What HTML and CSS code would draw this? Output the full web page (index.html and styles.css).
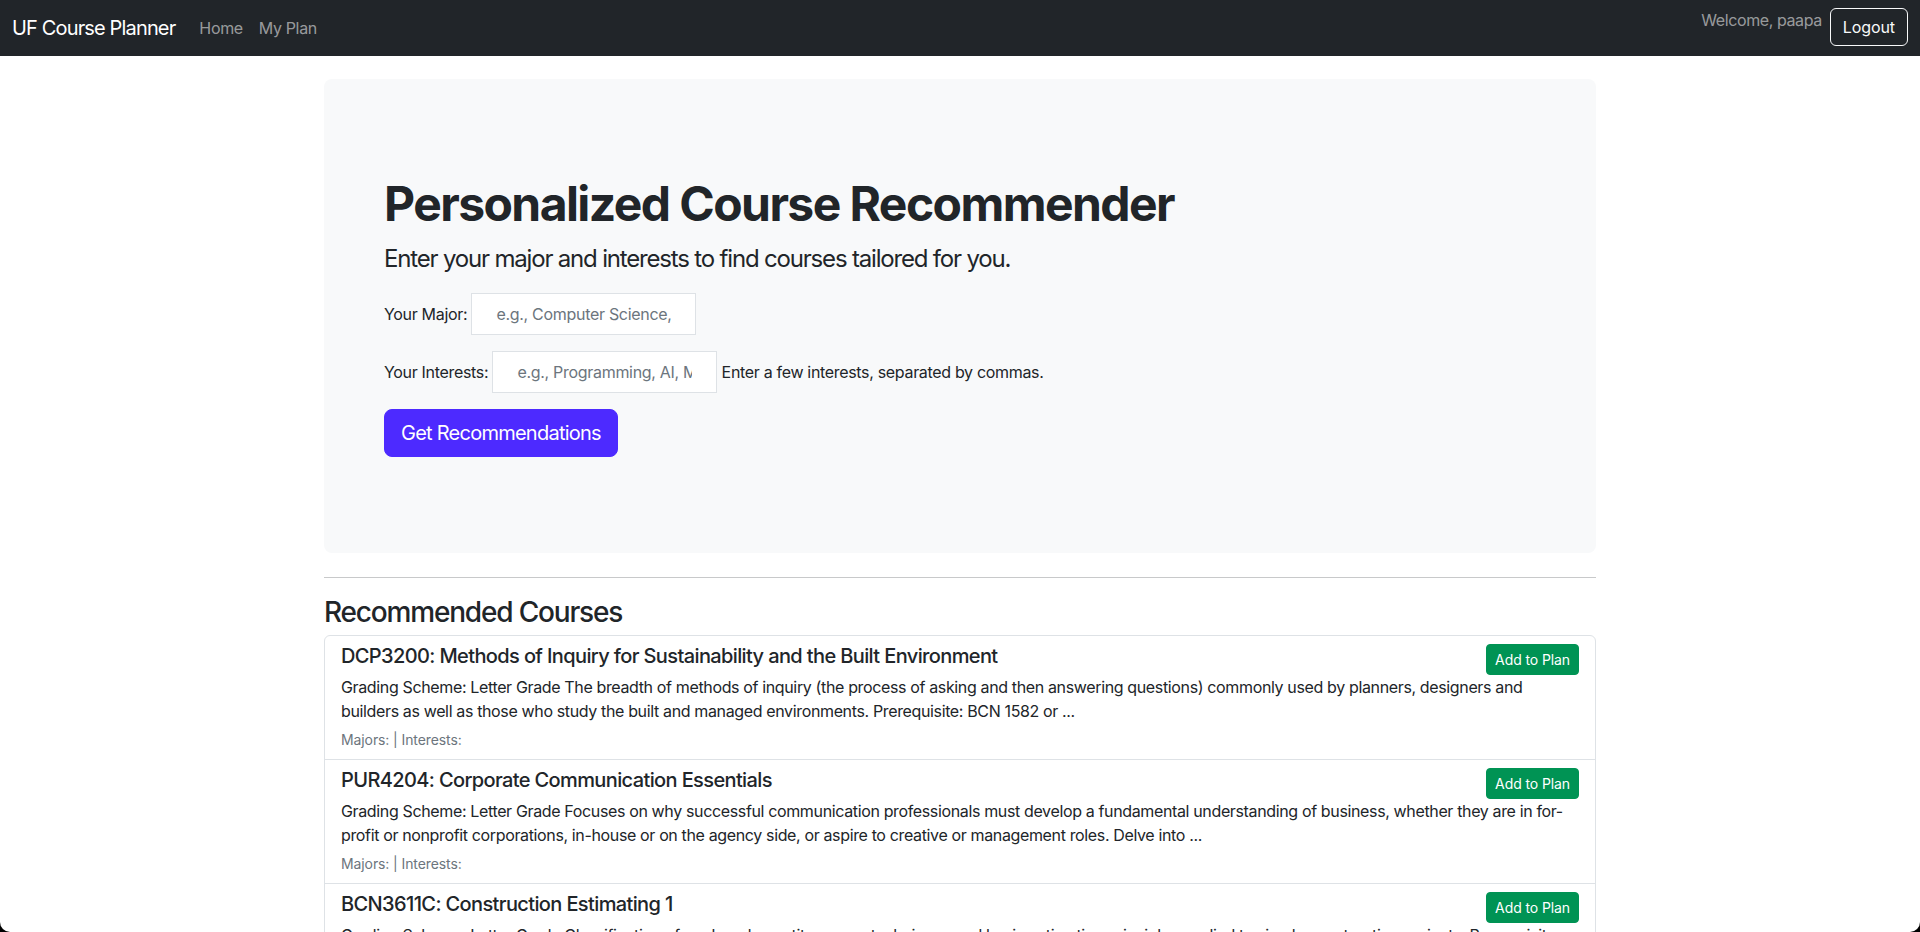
FILE: index.html
```html
<!DOCTYPE html>
<html lang="en">
<head>
<meta charset="utf-8">
<title>UF Course Planner</title>
<link rel="stylesheet" href="styles.css">
</head>
<body>
<nav class="navbar">
  <div class="nav-left">
    <a class="brand" href="#">UF Course Planner</a>
    <ul class="nav-links">
      <li><a href="#">Home</a></li>
      <li><a href="#">My Plan</a></li>
    </ul>
  </div>
  <div class="nav-right">
    <span class="welcome">Welcome, paapa</span>
    <button class="btn-logout" type="button">Logout</button>
  </div>
</nav>

<main class="page">
  <div class="page-inner">
    <section class="jumbo">
      <div class="jumbo-inner">
        <h1 class="title">Personalized Course Recommender</h1>
        <p class="lead">Enter your major and interests to find courses tailored for you.</p>
        <form class="rec-form">
          <div class="form-row">
            <label for="major">Your Major:</label>
            <input id="major" class="field" type="text" placeholder="e.g., Computer Science, Biology">
          </div>
          <div class="form-row">
            <label for="interests">Your Interests:</label>
            <input id="interests" class="field" type="text" placeholder="e.g., Programming, AI, Machine Learning">
            <span class="help">Enter a few interests, separated by commas.</span>
          </div>
          <button class="btn-recommend" type="button">Get Recommendations</button>
        </form>
      </div>
    </section>

    <hr class="divider">

    <h3 class="section-title">Recommended Courses</h3>
    <ul class="course-list">
      <li class="course">
        <div class="course-head">
          <h5 class="course-title">DCP3200: Methods of Inquiry for Sustainability and the Built Environment</h5>
          <button class="btn-add" type="button">Add to Plan</button>
        </div>
        <p class="course-desc">Grading Scheme: Letter Grade The breadth of methods of inquiry (the process of asking and then answering questions) commonly used by planners, designers and builders as well as those who study the built and managed environments. Prerequisite: BCN 1582 or ...</p>
        <small class="course-meta">Majors:  | Interests: </small>
      </li>
      <li class="course">
        <div class="course-head">
          <h5 class="course-title">PUR4204: Corporate Communication Essentials</h5>
          <button class="btn-add" type="button">Add to Plan</button>
        </div>
        <p class="course-desc">Grading Scheme: Letter Grade Focuses on why successful communication professionals must develop a fundamental understanding of business, whether they are in for-profit or nonprofit corporations, in-house or on the agency side, or aspire to creative or management roles. Delve into ...</p>
        <small class="course-meta">Majors:  | Interests: </small>
      </li>
      <li class="course">
        <div class="course-head">
          <h5 class="course-title">BCN3611C: Construction Estimating 1</h5>
          <button class="btn-add" type="button">Add to Plan</button>
        </div>
        <p class="course-desc">Grading Scheme: Letter Grade Classification of work and quantity survey techniques and basic estimating principles applied to simple construction projects. Prerequisite: BCN 3223 and ...</p>
        <small class="course-meta">Majors:  | Interests: </small>
      </li>
    </ul>
  </div>
</main>
</body>
</html>
```
FILE: styles.css
```css
* { box-sizing: border-box; }

html, body {
  margin: 0;
  padding: 0;
}

body {
  font-family: Inter, "Noto Sans", "Liberation Sans", sans-serif;
  font-size: 16px;
  line-height: 1.5;
  color: #212529;
  background: #fff;
}

body::after {
  content: "";
  position: fixed;
  inset: 0;
  border-radius: 0 0 10px 10px;
  box-shadow: 0 0 0 40px #000;
  pointer-events: none;
}

/* ---------- navbar ---------- */
.navbar {
  display: flex;
  justify-content: space-between;
  align-items: center;
  height: 56px;
  padding: 8px 12px;
  background: #212529;
}

.nav-left {
  display: flex;
  align-items: center;
}

.brand {
  font-size: 20px;
  line-height: 30px;
  padding: 5px 0;
  margin-right: 16px;
  color: #fff;
  text-decoration: none;
  letter-spacing: -0.85px;
}

.nav-links {
  display: flex;
  list-style: none;
  margin: 0;
  padding: 0;
}

.nav-links a {
  display: block;
  padding: 8px;
  color: rgba(255, 255, 255, 0.55);
  text-decoration: none;
  letter-spacing: -0.35px;
}

.nav-right {
  display: flex;
  align-items: flex-start;
  align-self: stretch;
  gap: 8px;
}

.welcome {
  color: rgba(255, 255, 255, 0.55);
  line-height: 24px;
  letter-spacing: -0.4px;
}

.btn-logout {
  font-family: inherit;
  font-size: 16px;
  line-height: 24px;
  padding: 6px 12px;
  color: #f8f9fa;
  background: transparent;
  border: 1px solid #f8f9fa;
  border-radius: 6px;
  letter-spacing: -0.1px;
}

/* ---------- page ---------- */
.page {
  max-width: 1320px;
  margin: 0 auto;
  padding: 0 12px;
}

.page-inner {
  padding: 0 12px;
}

.jumbo {
  margin-top: 23px;
  margin-bottom: 24px;
  padding: 48px;
  background: #f8f9fa;
  border-radius: 8px;
}

.jumbo-inner {
  padding: 48px 12px;
}

.title {
  margin: 0 0 8px;
  font-size: 48px;
  font-weight: 700;
  line-height: 1.2;
  letter-spacing: -1.57px;
}

.lead {
  margin: 0 0 16px;
  font-size: 24px;
  line-height: 36px;
  letter-spacing: -1.18px;
}

.rec-form {
  margin: 0;
}

.form-row {
  margin-bottom: 16px;
  letter-spacing: -0.32px;
}

.field {
  width: 225px;
  height: 42px;
  padding: 8px 24px;
  font-family: inherit;
  font-size: 16px;
  line-height: 24px;
  color: #212529;
  background: #fff;
  border: 1px solid #dee2e6;
  border-radius: 0;
  letter-spacing: -0.3px;
}

.field::placeholder {
  color: #6c757d;
}

.btn-recommend {
  font-family: inherit;
  font-size: 20px;
  line-height: 30px;
  padding: 8px 16px;
  color: #fff;
  background: #4d2aff;
  border: 1px solid #4d2aff;
  border-radius: 8px;
  letter-spacing: -0.75px;
}

.divider {
  margin: 0 0 18px;
  border: 0;
  border-top: 1px solid #c8c9ca;
}

.section-title {
  margin: 0 0 6px;
  font-size: 28px;
  font-weight: 500;
  line-height: 1.2;
  letter-spacing: -1.18px;
}

/* ---------- course list ---------- */
.course-list {
  list-style: none;
  margin: 0;
  padding: 0;
  border: 1px solid #dee2e6;
  border-radius: 6px;
}

.course {
  padding: 8px 16px;
}

.course + .course {
  border-top: 1px solid #dee2e6;
}

.course-head {
  display: flex;
  justify-content: space-between;
}

.course-title {
  margin: 0 0 4px;
  font-size: 20px;
  font-weight: 500;
  line-height: 1.2;
  letter-spacing: -0.62px;
}

.btn-add {
  flex: none;
  font-family: inherit;
  font-size: 14px;
  line-height: 21px;
  padding: 4px 8px;
  color: #fff;
  background: #009354;
  border: 1px solid #009354;
  border-radius: 4px;
  letter-spacing: -0.1px;
}

.course-desc {
  margin: 0 0 4px;
  letter-spacing: -0.36px;
}

.course-meta {
  font-size: 14px;
  color: #6c757d;
  letter-spacing: -0.1px;
}
```
